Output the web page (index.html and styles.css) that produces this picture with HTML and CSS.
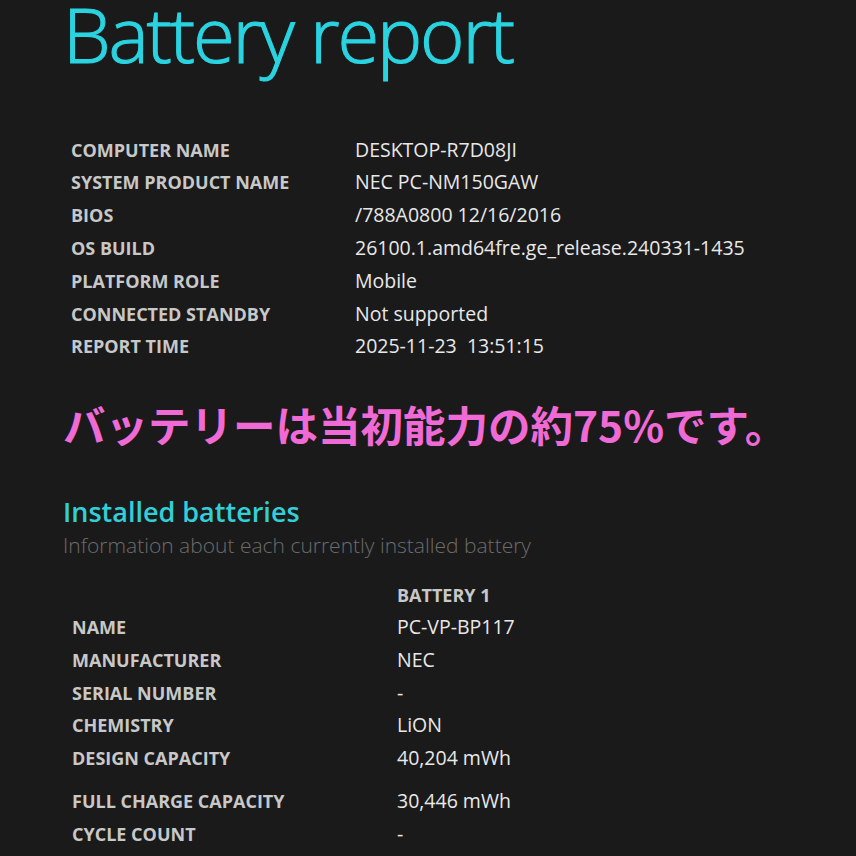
FILE: index.html
```html
<!DOCTYPE html>
<html lang="ja">
<head>
<meta charset="utf-8">
<title>Battery report</title>
<link rel="stylesheet" href="styles.css">
</head>
<body>
<main class="page">
  <h1 class="title">Battery report</h1>
  <div class="info">
    <div class="lbl">COMPUTER NAME</div><div class="val">DESKTOP-R7D08JI</div>
    <div class="lbl">SYSTEM PRODUCT NAME</div><div class="val">NEC PC-NM150GAW</div>
    <div class="lbl">BIOS</div><div class="val">/788A0800 12/16/2016</div>
    <div class="lbl">OS BUILD</div><div class="val">26100.1.amd64fre.ge_release.240331-1435</div>
    <div class="lbl">PLATFORM ROLE</div><div class="val">Mobile</div>
    <div class="lbl">CONNECTED STANDBY</div><div class="val">Not supported</div>
    <div class="lbl">REPORT TIME</div><div class="val">2025-11-23&nbsp;&nbsp;13:51:15</div>
  </div>
  <p class="note">バッテリーは当初能力の約75%です。</p>
  <h2 class="section">Installed batteries</h2>
  <p class="sub">Information about each currently installed battery</p>
  <div class="batt">
    <div class="lbl"></div><div class="lbl">BATTERY 1</div>
    <div class="lbl">NAME</div><div class="val">PC-VP-BP117</div>
    <div class="lbl">MANUFACTURER</div><div class="val">NEC</div>
    <div class="lbl">SERIAL NUMBER</div><div class="val">-</div>
    <div class="lbl">CHEMISTRY</div><div class="val">LiON</div>
    <div class="lbl">DESIGN CAPACITY</div><div class="val">40,204 mWh</div>
    <div class="lbl">FULL CHARGE CAPACITY</div><div class="val">30,446 mWh</div>
    <div class="lbl">CYCLE COUNT</div><div class="val">-</div>
  </div>
</main>
</body>
</html>
```
FILE: styles.css
```css
html, body {
  margin: 0;
  padding: 0;
  background: #1a1a1a;
}
.page {
  font-family: "Open Sans", "Noto Sans", sans-serif;
  padding: 1px 0 0 63px;
  height: 856px;
  overflow: hidden;
  box-sizing: border-box;
}
.title {
  margin: 0;
  font-weight: 300;
  font-size: 76px;
  line-height: 66px;
  color: #2ad3e0;
  letter-spacing: -2.2px;
  -webkit-text-stroke: 1.1px #2ad3e0;
}
.info {
  display: grid;
  grid-template-columns: 284px auto;
  grid-auto-rows: 32.8px;
  align-items: center;
  margin-top: 66.5px;
  margin-left: 8px;
}
.lbl {
  font-weight: 700;
  font-size: 18px;
  line-height: 32.6px;
  color: #c8c8c8;
  white-space: nowrap;
}
.val {
  font-size: 19.5px;
  line-height: 32.6px;
  color: #e8e8e8;
  white-space: nowrap;
}
.note {
  margin: 36px 0 0 0;
  font-family: "Noto Sans CJK JP", sans-serif;
  font-weight: 700;
  font-size: 42.5px;
  line-height: 50px;
  color: #f06ad6;
  white-space: nowrap;
}
.section {
  margin: 46px 0 0 0;
  font-weight: 600;
  font-size: 27px;
  line-height: 34px;
  color: #33cfd8;
}
.sub {
  margin: 0;
  font-weight: 300;
  font-size: 21px;
  line-height: 32px;
  color: #6c6c6c;
  white-space: nowrap;
}
.batt {
  display: grid;
  grid-template-columns: 325px auto;
  grid-template-rows: repeat(6, 32.6px) 43px 33px;
  align-items: end;
  margin-top: 17.7px;
  margin-left: 9px;
}
```
